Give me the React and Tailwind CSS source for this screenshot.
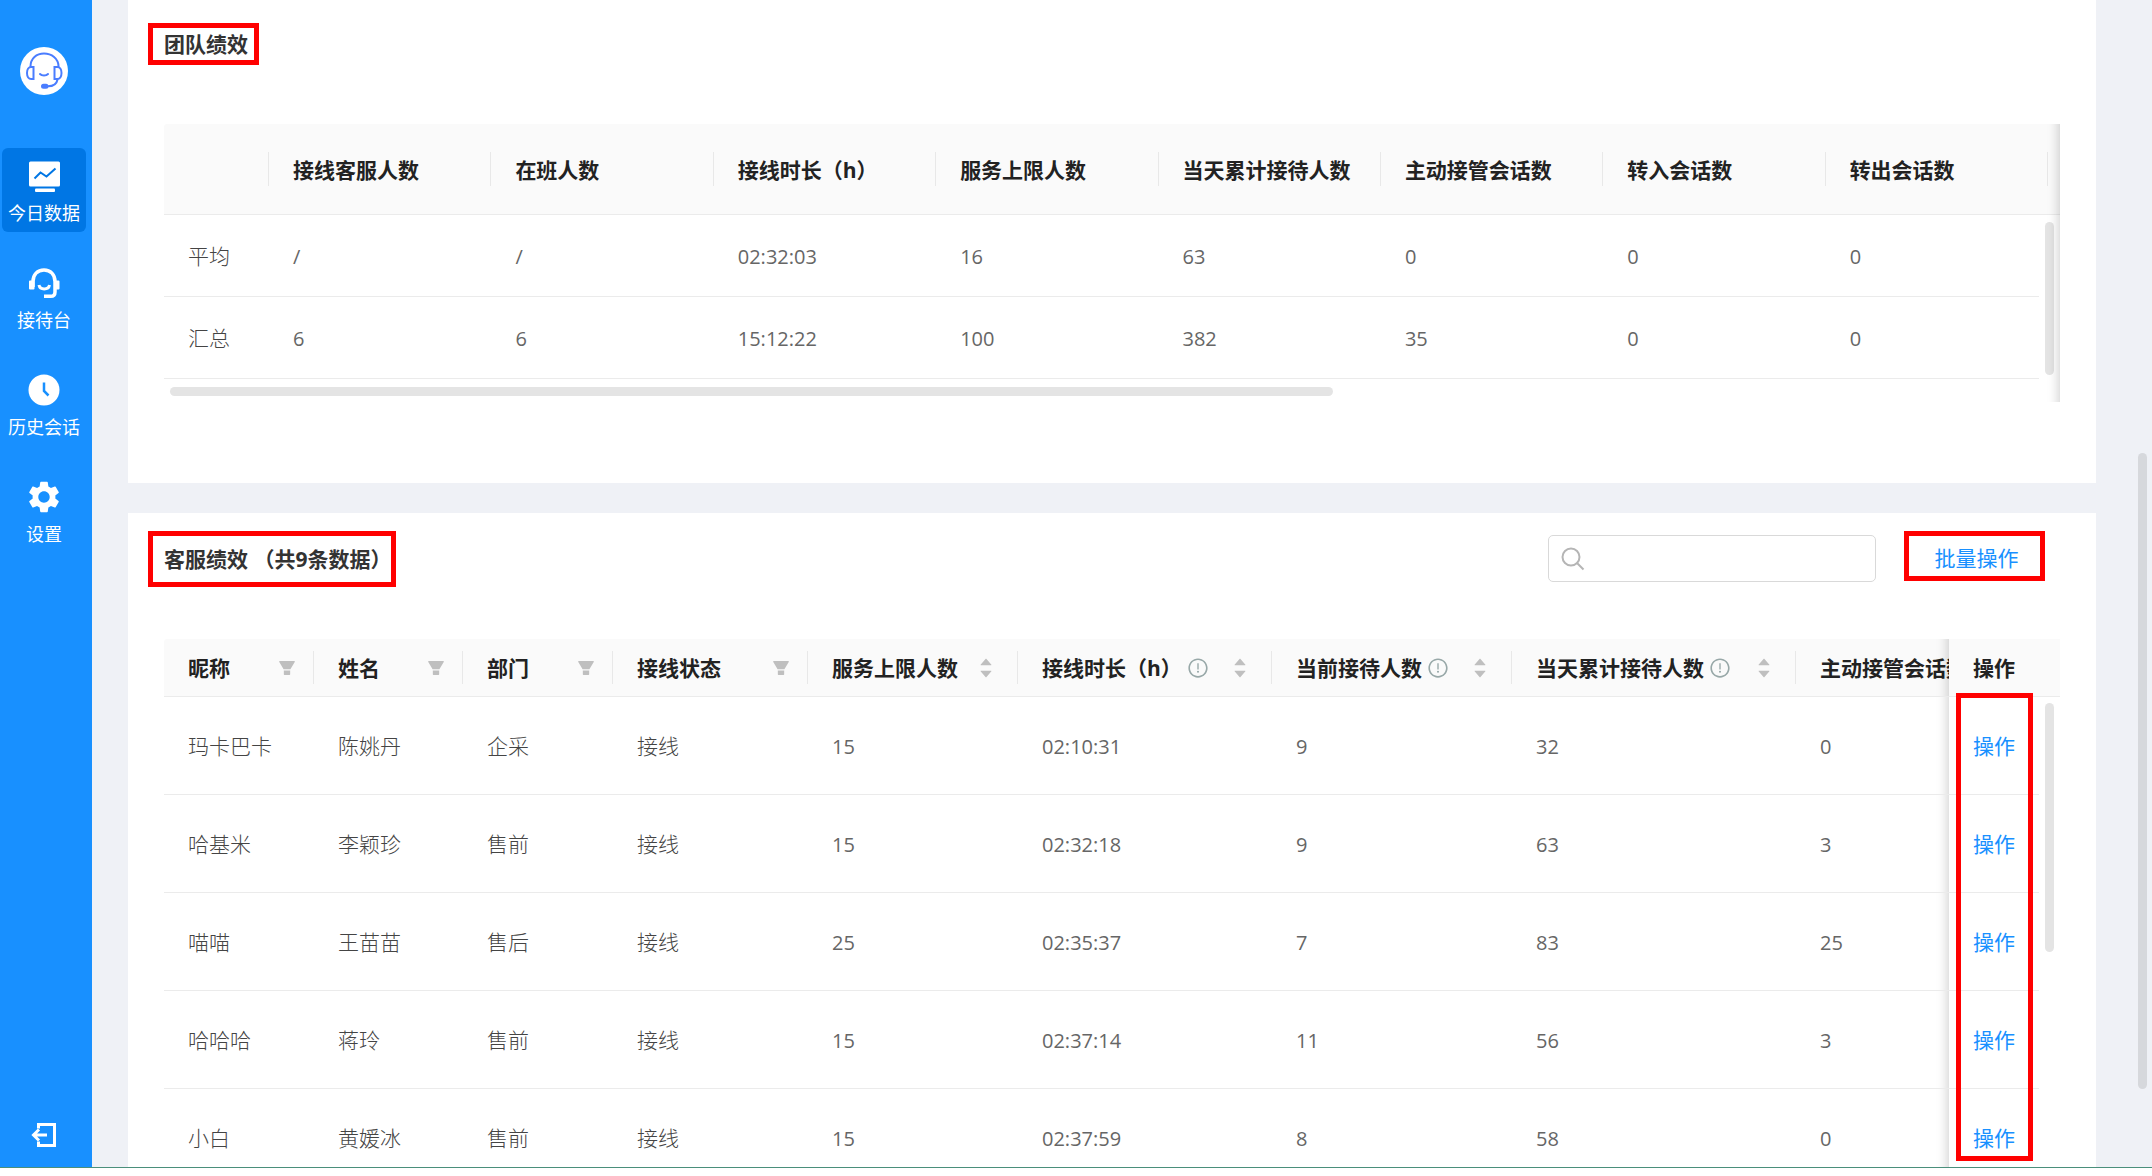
import {
  AiFillCaretDown,
  AiFillCaretUp,
  AiFillFilter,
  AiOutlineExclamationCircle,
} from 'react-icons/ai'
import { MdSettings } from 'react-icons/md'

const teamColumns = [
  '接线客服人数',
  '在班人数',
  '接线时长（h）',
  '服务上限人数',
  '当天累计接待人数',
  '主动接管会话数',
  '转入会话数',
  '转出会话数',
]

const teamRows = [
  { label: '平均', values: ['/', '/', '02:32:03', '16', '63', '0', '0', '0'] },
  { label: '汇总', values: ['6', '6', '15:12:22', '100', '382', '35', '0', '0'] },
]

const agentColumns = [
  { title: '昵称', width: 'w-[150px]', filter: true },
  { title: '姓名', width: 'w-[149px]', filter: true },
  { title: '部门', width: 'w-[150px]', filter: true },
  { title: '接线状态', width: 'w-[195px]', filter: true },
  { title: '服务上限人数', width: 'w-[210px]', sort: true },
  { title: '接线时长（h）', width: 'w-[254px]', sort: true, info: true },
  { title: '当前接待人数', width: 'w-[240px]', sort: true, info: true },
  { title: '当天累计接待人数', width: 'w-[284px]', sort: true, info: true },
  { title: '主动接管会话数', width: 'w-[240px]' },
]

const agents = [
  { texts: ['玛卡巴卡', '陈姚丹', '企采', '接线'], numbers: ['15', '02:10:31', '9', '32', '0'] },
  { texts: ['哈基米', '李颖珍', '售前', '接线'], numbers: ['15', '02:32:18', '9', '63', '3'] },
  { texts: ['喵喵', '王苗苗', '售后', '接线'], numbers: ['25', '02:35:37', '7', '83', '25'] },
  { texts: ['哈哈哈', '蒋玲', '售前', '接线'], numbers: ['15', '02:37:14', '11', '56', '3'] },
  { texts: ['小白', '黄媛冰', '售前', '接线'], numbers: ['15', '02:37:59', '8', '58', '0'] },
]

const Logo = () => (
  <svg viewBox="0 0 48 48" className="size-12" fill="none" stroke="#4a7dff" strokeWidth="2" strokeLinecap="round">
    <circle cx="24" cy="24" r="24" fill="#fff" stroke="none" />
    <path d="M10.500 19.500C10.500 11.500 16.500 6.500 24 6.500s14.500 5 14.500 13" />
    <path d="M13.500 20h-2.300c-2.500 0-4.200 2.500-4.200 6s1.700 6 4.200 6h2.300z" />
    <path d="M34.500 20h2.800c2.500 0 4.200 2.500 4.200 6s-1.700 6-4.200 6h-2.800z" />
    <path d="M20 27c1.800 2 6.200 2 8 0" />
    <path d="M37.500 32.500c-.8 4.500-4.300 6.800-9.500 6.800" />
    <rect x="22" y="37.800" width="5.500" height="3" rx="1.500" fill="#4a7dff" />
  </svg>
)

const MonitorIcon = () => (
  <svg viewBox="0 0 32 32" className="size-8">
    <rect x="1" y="1.500" width="31" height="25" rx="1.500" fill="#fff" />
    <path d="M6.500 18.500l6-6 6 4 9-8" fill="none" stroke="#0076e4" strokeWidth="2" />
    <rect x="7" y="28.500" width="20" height="3.500" rx="1" fill="#fff" />
  </svg>
)

const HeadsetIcon = () => (
  <svg viewBox="0 0 32 32" className="size-8" fill="none" stroke="#fff" strokeWidth="3.500">
    <path d="M5 20v-5.500C5 7.500 9.500 3 16 3s11 4.500 11 11.500V25c0 2.800-1.500 4.300-4.300 4.300H16" />
    <path d="M11 18c1 5.300 9.500 5.300 10.500 0" strokeWidth="3" />
    <path d="M2 14.500v7h3.500v-7zM27.500 14.500v7h3v-7z" fill="#fff" strokeWidth="2" strokeLinejoin="round" />
  </svg>
)

const ClockIcon = () => (
  <svg viewBox="0 0 32 32" className="size-8" fill="none">
    <circle cx="16" cy="16" r="15.500" fill="#fff" />
    <path d="M16 8.500v8.500l4.500 4.500" stroke="#1890ff" strokeWidth="2.500" />
  </svg>
)

const LogoutIcon = () => (
  <svg viewBox="0 0 26 26" className="size-[26px]" fill="none" stroke="#fff" strokeWidth="3">
    <path d="M7.500 6.500V2.500h16v21h-16v-4" />
    <path d="M16 13H2.500M8 7.500L2.500 13 8 18.500" />
  </svg>
)

const SearchIcon = () => (
  <svg viewBox="0 0 24 24" className="size-6 shrink-0" fill="none" stroke="#b5b5b5" strokeWidth="2">
    <circle cx="10" cy="10" r="8.500" />
    <path d="M16 16l6.500 6.500" />
  </svg>
)

const navItems = [
  { label: '今日数据', icon: <MonitorIcon />, active: true },
  { label: '接待台', icon: <HeadsetIcon /> },
  { label: '历史会话', icon: <ClockIcon /> },
  { label: '设置', icon: <MdSettings className="size-[38px] shrink-0 text-white" /> },
]

const Sidebar = () => (
  <aside className="flex w-[92px] shrink-0 flex-col bg-[#1890ff] pt-[47px] pb-[19px]">
    <div className="flex w-[88px] justify-center">
      <Logo />
    </div>
    <nav className="mt-[53px] flex flex-col gap-[23px] pl-[2px]">
      {navItems.map((item) => (
        <a
          key={item.label}
          href="#"
          className={`flex h-[84px] w-[84px] flex-col items-center gap-1 rounded-[6px] pt-3 text-[18px] leading-[34px] whitespace-nowrap text-white ${item.active ? 'bg-[#0076e4]' : ''}`}
        >
          <span className="flex size-8 items-center justify-center">{item.icon}</span>
          {item.label}
        </a>
      ))}
    </nav>
    <button type="button" aria-label="退出" className="mt-auto flex w-[88px] justify-center">
      <LogoutIcon />
    </button>
  </aside>
)

const EdgeShadow = () => (
  <span className="pointer-events-none absolute inset-y-0 right-0 w-10 shadow-[inset_-13px_0_11px_-11px_rgba(0,0,0,0.18)]" />
)

const TeamPanel = () => (
  <section className="bg-white pt-[23px] pr-9 pb-[81px] pl-5">
    <h2 className="flex h-[42px] w-[111px] items-center border-[5px] border-[#ff0000] pt-[2px] pl-[11px] text-[21px] font-bold whitespace-nowrap text-[#333]">
      团队绩效
    </h2>
    <div className="relative mt-[59px] ml-4 overflow-hidden rounded-tl-[3px]">
      <div className="overflow-hidden border-b border-[#ebebeb] bg-[#fafafa]">
        <table className="w-[1884px] table-fixed text-left text-[21px] text-[#222]">
          <thead>
            <tr className="h-[90px]">
              <th className="w-[105px] p-0">
                <div className="h-[34px] border-r border-[#e8e8e8]" />
              </th>
              {teamColumns.map((title) => (
                <th key={title} className="p-0 font-bold whitespace-nowrap">
                  <div className="h-[34px] border-r border-[#e8e8e8] pl-6 leading-9">{title}</div>
                </th>
              ))}
            </tr>
          </thead>
        </table>
      </div>
      <div className="flex">
        <div className="min-w-0 flex-1 overflow-hidden">
          <table className="w-[1884px] table-fixed border-separate border-spacing-0 text-[#666]">
            <tbody>
              {teamRows.map((row) => (
                <tr key={row.label} className="h-[82px]">
                  <td className="w-[105px] border-b border-[#ebebeb] pt-[2px] pl-6 text-[21px] font-light text-[#444]">
                    {row.label}
                  </td>
                  {row.values.map((value, i) => (
                    <td key={i} className="border-b border-[#ebebeb] pt-[2px] pl-6 text-[20px]">
                      {value}
                    </td>
                  ))}
                </tr>
              ))}
            </tbody>
          </table>
          <div className="px-[6px] pt-2 pb-[6px]">
            <div className="h-[9px] w-[62.4%] rounded-full bg-[#e4e4e4]" />
          </div>
        </div>
        <div className="w-[21px] shrink-0 pt-[7px] pl-[6px]">
          <div className="h-[153px] w-[9px] rounded-full bg-[#e4e4e4]" />
        </div>
      </div>
      <EdgeShadow />
    </div>
  </section>
)

const AgentHeaderCell = ({ column }) => (
  <th className={`p-0 font-bold whitespace-nowrap ${column.width}`}>
    <div
      className={`flex h-[33px] items-center border-r border-[#e8e8e8] pl-6 leading-[33px] ${column.filter ? 'pr-4' : 'pr-[23px]'}`}
    >
      <span className="pt-[2px]">{column.title}</span>
      {column.info && <AiOutlineExclamationCircle className="ml-[5px] size-[22px] shrink-0 text-[#98a8a8]" />}
      {column.filter && (
        <button type="button" aria-label={`筛选${column.title}`} className="ml-auto">
          <AiFillFilter className="size-5 text-[#bfbfbf]" />
        </button>
      )}
      {column.sort && (
        <button type="button" aria-label={`排序${column.title}`} className="ml-auto flex flex-col">
          <AiFillCaretUp className="size-4 text-[#bfbfbf]" />
          <AiFillCaretDown className="-mt-1 size-4 text-[#bfbfbf]" />
        </button>
      )}
    </div>
  </th>
)

// Shadow cast on the scrolled columns by the pinned one
const PinnedShadow = () => (
  <span className="pointer-events-none absolute inset-y-0 right-full w-10 shadow-[inset_-13px_0_11px_-11px_rgba(0,0,0,0.18)]" />
)

const AgentTable = () => (
  <div className="relative mt-[52px] mr-9 ml-4">
    <div className="overflow-hidden rounded-tl-[3px] border-b border-[#ebebeb] bg-[#fafafa]">
      <table className="w-[1983px] table-fixed border-separate border-spacing-0 text-left text-[21px] text-[#222]">
        <thead>
          <tr className="h-[57px]">
            {agentColumns.map((column) => (
              <AgentHeaderCell key={column.title} column={column} />
            ))}
            <th className="sticky right-0 w-[111px] bg-[#fafafa] pt-[2px] pr-0 pb-0 pl-6 font-bold">
              操作
              <PinnedShadow />
            </th>
          </tr>
        </thead>
      </table>
    </div>
    <div className="flex">
      <div className="min-w-0 flex-1 overflow-hidden">
        <table className="w-[1962px] table-fixed border-separate border-spacing-0 text-[#666]">
          <colgroup>
            {agentColumns.map((column) => (
              <col key={column.title} className={column.width} />
            ))}
            <col className="w-[90px]" />
          </colgroup>
          <tbody>
            {agents.map((agent) => (
              <tr key={agent.texts[0]} className="h-[98px]">
                {agent.texts.map((text, i) => (
                  <td key={i} className="border-b border-[#ebebeb] pt-[3px] pl-6 text-[21px] font-light text-[#444]">
                    {text}
                  </td>
                ))}
                {agent.numbers.map((number, i) => (
                  <td key={i} className="border-b border-[#ebebeb] pt-[3px] pl-6 text-[20px]">
                    {number}
                  </td>
                ))}
                <td className="sticky right-0 border-b border-[#ebebeb] bg-white pt-[3px] pl-6 text-[21px]">
                  <a href="#" className="text-[#1890ff]">
                    操作
                  </a>
                  <PinnedShadow />
                </td>
              </tr>
            ))}
          </tbody>
        </table>
      </div>
      <div className="w-[21px] shrink-0 pt-[6px] pl-[6px]">
        <div className="h-[249px] w-[9px] rounded-full bg-[#e4e4e4]" />
      </div>
    </div>
    <div className="pointer-events-none absolute top-[54px] right-[27px] h-[468px] w-[77px] border-[5px] border-[#ff0000]" />
  </div>
)

const AgentPanel = () => (
  <section className="flex-1 bg-white pt-[18px] pl-5">
    <div className="flex items-start pr-[51px]">
      <h2 className="flex h-14 w-[248px] items-center border-[5px] border-[#ff0000] pt-[2px] pl-[11px] text-[21px] font-bold whitespace-pre text-[#333]">
        客服绩效 （共9条数据）
      </h2>
      <label className="mt-1 ml-auto flex h-[47px] w-[328px] items-center rounded-[5px] border border-[#d9d9d9] pl-3">
        <SearchIcon />
        <input type="text" aria-label="搜索" className="min-w-0 flex-1 px-2 text-[21px] outline-none" />
      </label>
      <button
        type="button"
        className="ml-7 h-[50px] w-[141px] border-[5px] border-[#ff0000] pt-[2px] pl-1 text-[21px] leading-10 text-[#1890ff]"
      >
        批量操作
      </button>
    </div>
    <AgentTable />
  </section>
)

export default function App() {
  return (
    <div className="flex h-screen flex-col bg-white pb-2 font-['Open_Sans','Noto_Sans_CJK_SC',sans-serif]">
      <div className="flex min-h-0 flex-1 overflow-hidden border-b border-[#4a8f7b]">
        <Sidebar />
        <main className="flex min-w-0 flex-1 bg-[#eff1f6] pl-9">
          <div className="flex min-w-0 flex-1 flex-col gap-[30px]">
            <TeamPanel />
            <AgentPanel />
          </div>
          <div className="flex w-14 shrink-0 justify-end pt-[453px] pr-[5px]">
            <div className="h-[636px] w-[9px] rounded-full bg-[#d6d8dc]" />
          </div>
        </main>
      </div>
    </div>
  )
}
